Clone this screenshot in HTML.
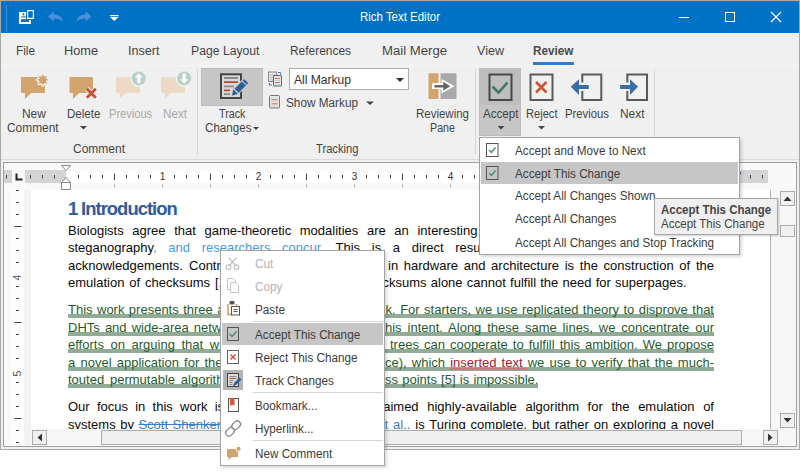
<!DOCTYPE html>
<html><head><meta charset="utf-8">
<style>
*{margin:0;padding:0;box-sizing:border-box}
html,body{width:800px;height:476px;overflow:hidden;background:#fff;font-family:"Liberation Sans",sans-serif;position:relative}
.t{position:absolute;white-space:nowrap}
.doc{position:absolute;font-size:13px;white-space:nowrap;line-height:17px;color:#0a0a0a}
.j{text-align:justify;text-align-last:justify;white-space:normal;height:17px}
.gr{color:#1f5b2e}
.bl{color:#4a9be0}
.ins{color:#a5202e;text-decoration:underline;text-decoration-color:#c87a80;text-decoration-thickness:2px;text-underline-offset:1px}
.del{color:#3b7fc4;text-decoration:line-through}
.bl2{color:#3b7fc4}
.band{position:absolute;height:4px;background:#91ac96}
</style></head><body>
<div class="t" style="left:0px;top:0px;width:800px;height:450px;background:#f0f0f0;"></div>
<div class="t" style="left:1px;top:1px;width:798px;height:32px;background:#0072c6;"></div>
<div class="t" style="left:6px;top:5px;width:1px;height:27px;background:#3d8fd6;"></div>
<svg class="t" style="left:0;top:0" width="800" height="34" viewBox="0 0 800 34">
<rect x="19" y="12" width="2" height="12" fill="#fff"/>
<rect x="19" y="22" width="12" height="2" fill="#fff"/>
<rect x="29" y="20" width="2" height="4" fill="#fff"/>
<rect x="19" y="17.4" width="7" height="1.8" fill="#fff"/>
<rect x="21" y="12" width="5" height="4.4" fill="#fff"/><rect x="22.6" y="13.3" width="1.7" height="2" fill="#0072c6"/>
<rect x="27.6" y="10.6" width="5.8" height="7.8" fill="none" stroke="#fff" stroke-width="1.2"/>
<path d="M48 16.5L54 11.5V14.5C59 14.5 63 17.5 63 22C61 19.5 58 18.5 54 18.5V21.5Z" fill="#4a90d8"/>
<path d="M91.5 16.5L85.5 11.5V14.5C80.5 14.5 76.5 17.5 76.5 22C78.5 19.5 81.5 18.5 85.5 18.5V21.5Z" fill="#4a90d8"/>
<rect x="110" y="15" width="8.5" height="1.2" fill="#fff"/>
<path d="M110 17H118.5L114.25 21Z" fill="#fff"/>
<rect x="679" y="17" width="10" height="1" fill="#fff"/>
<rect x="725.5" y="12.5" width="9" height="9" fill="none" stroke="#fff" stroke-width="1"/>
<path d="M771 12L781 22M781 12L771 22" stroke="#fff" stroke-width="1.2"/>
</svg>
<div class="t" style="left:360.20px;top:9.34px;font-size:12px;line-height:16px;color:#fff;transform:scaleX(0.9544);transform-origin:0.00px 0;">Rich Text Editor</div>
<div class="t" style="left:1px;top:33px;width:798px;height:32px;background:#f0f0f0;"></div>
<div class="t" style="left:15.50px;top:42.67px;font-size:12.5px;line-height:16px;color:#444;transform:scaleX(0.9441);transform-origin:0.00px 0;">File</div>
<div class="t" style="left:64.00px;top:42.67px;font-size:12.5px;line-height:16px;color:#444;transform:scaleX(1.0187);transform-origin:0.00px 0;">Home</div>
<div class="t" style="left:128.00px;top:42.67px;font-size:12.5px;line-height:16px;color:#444;transform:scaleX(1.0080);transform-origin:0.00px 0;">Insert</div>
<div class="t" style="left:190.50px;top:42.67px;font-size:12.5px;line-height:16px;color:#444;transform:scaleX(0.9760);transform-origin:0.00px 0;">Page Layout</div>
<div class="t" style="left:290.00px;top:42.67px;font-size:12.5px;line-height:16px;color:#444;transform:scaleX(0.9541);transform-origin:0.00px 0;">References</div>
<div class="t" style="left:382.00px;top:42.67px;font-size:12.5px;line-height:16px;color:#444;transform:scaleX(1.0516);transform-origin:0.00px 0;">Mail Merge</div>
<div class="t" style="left:477.00px;top:42.67px;font-size:12.5px;line-height:16px;color:#444;transform:scaleX(1.0047);transform-origin:0.00px 0;">View</div>
<div class="t" style="left:533.00px;top:42.67px;font-size:12.5px;line-height:16px;color:#4a4a4a;font-weight:bold;transform:scaleX(0.9391);transform-origin:0.00px 0;">Review</div>
<div class="t" style="left:533px;top:62px;width:41px;height:3px;background:#2b7cd3;"></div>
<div class="t" style="left:1px;top:65px;width:798px;height:94px;background:#f0f0f0;"></div>
<div class="t" style="left:1px;top:65px;width:798px;height:1px;background:#f5f5f5;"></div>
<div class="t" style="left:1px;top:159px;width:798px;height:1px;background:#dadada;"></div>
<div class="t" style="left:479px;top:68px;width:42px;height:68px;background:#c6c6c6;box-shadow:inset 0 0 0 1px #bdbdbd"></div><div class="t" style="left:480px;top:69px;width:40px;height:36px;background:#bebebe"></div>
<div class="t" style="left:1px;top:160px;width:798px;height:2px;background:#f0f0f0;"></div>
<div class="t" style="left:197px;top:69px;width:1px;height:86px;background:#d6d6d6;"></div>
<div class="t" style="left:475px;top:69px;width:1px;height:86px;background:#d6d6d6;"></div>
<div class="t" style="left:654px;top:69px;width:1px;height:86px;background:#d6d6d6;"></div>
<svg class="t" style="left:0;top:0" width="800" height="160" viewBox="0 0 800 160">
<!-- new comment -->
<path d="M22 77H44Q45 77 45 78V92Q45 93 44 93H31L25 99V93H22Q21 93 21 92V78Q21 77 22 77Z" fill="#d4a46e"/>
<path d="M42.80 74.00L44.10 76.66L46.90 75.70L45.94 78.50L48.60 79.80L45.94 81.10L46.90 83.90L44.10 82.94L42.80 85.60L41.50 82.94L38.70 83.90L39.66 81.10L37.00 79.80L39.66 78.50L38.70 75.70L41.50 76.66Z" fill="#f0f0f0" stroke="#f0f0f0" stroke-width="2.6" stroke-linejoin="round"/>
<path d="M42.80 74.00L44.10 76.66L46.90 75.70L45.94 78.50L48.60 79.80L45.94 81.10L46.90 83.90L44.10 82.94L42.80 85.60L41.50 82.94L38.70 83.90L39.66 81.10L37.00 79.80L39.66 78.50L38.70 75.70L41.50 76.66Z" fill="#d4a46e"/>
<!-- delete -->
<path d="M70.5 77H92Q93 77 93 78V92Q93 93 92 93H79L73 99V93H70.5Q69.5 93 69.5 92V78Q69.5 77 70.5 77Z" fill="#d4a46e"/>
<path d="M86.8 88.8L95.8 97.8M95.8 88.8L86.8 97.8" stroke="#f0f0f0" stroke-width="4.8"/>
<path d="M86.8 88.8L95.8 97.8M95.8 88.8L86.8 97.8" stroke="#c9523a" stroke-width="2.8"/>
<!-- previous -->
<path d="M117 77.3H139Q140 77.3 140 78.3V91.7Q140 92.7 139 92.7H126L120 98.5V92.7H117Q116 92.7 116 91.7V78.3Q116 77.3 117 77.3Z" fill="#ebd9c4"/>
<circle cx="138.8" cy="78.4" r="8.6" fill="#f0f0f0"/>
<circle cx="138.8" cy="78.4" r="7" fill="#b9d0c8"/>
<path d="M138.8 73.2L142.8 77.6H140.3V83.2H137.3V77.6H134.8Z" fill="#fff"/>
<!-- next -->
<path d="M162 77.3H184Q185 77.3 185 78.3V91.7Q185 92.7 184 92.7H171L165 98.5V92.7H162Q161 92.7 161 91.7V78.3Q161 77.3 162 77.3Z" fill="#ebd9c4"/>
<circle cx="184.2" cy="78.4" r="8.6" fill="#f0f0f0"/>
<circle cx="184.2" cy="78.4" r="7" fill="#b9d0c8"/>
<path d="M184.2 83.6L188.2 79.2H185.7V73.6H182.7V79.2H180.2Z" fill="#fff"/>
<!-- dropdown arrows -->
<path d="M80 126H87L83.5 129.5Z" fill="#444"/>
<path d="M253 127H259L256 130Z" fill="#444"/>
<path d="M497.5 126H504.5L501 129.5Z" fill="#444"/>
<path d="M538 126H545L541.5 129.5Z" fill="#444"/>
<path d="M366 101.5H374L370 105Z" fill="#444"/>
</svg>
<div class="t" style="left:21.60px;top:105.84px;font-size:12px;line-height:16px;color:#444;transform:scaleX(0.9933);transform-origin:0.00px 0;">New</div>
<div class="t" style="left:7.40px;top:119.84px;font-size:12px;line-height:16px;color:#444;transform:scaleX(0.9919);transform-origin:0.00px 0;">Comment</div>
<div class="t" style="left:67.00px;top:105.84px;font-size:12px;line-height:16px;color:#444;transform:scaleX(0.9602);transform-origin:0.00px 0;">Delete</div>
<div class="t" style="left:108.50px;top:105.84px;font-size:12px;line-height:16px;color:#a8a8a8;transform:scaleX(0.9233);transform-origin:0.00px 0;">Previous</div>
<div class="t" style="left:163.40px;top:105.84px;font-size:12px;line-height:16px;color:#a8a8a8;transform:scaleX(0.9732);transform-origin:0.00px 0;">Next</div>
<div class="t" style="left:73.00px;top:140.84px;font-size:12px;line-height:16px;color:#444;transform:scaleX(0.9996);transform-origin:0.00px 0;">Comment</div>
<div class="t" style="left:201px;top:68px;width:62px;height:38px;background:#c6c6c6;box-shadow:inset 0 0 0 1px #bdbdbd"></div>
<svg class="t" style="left:0;top:0" width="800" height="160" viewBox="0 0 800 160">
<rect x="221" y="74.3" width="20" height="23.7" fill="#d9d9d9" stroke="#444" stroke-width="2"/>
<path d="M224 78H238M224 86.3H234M224 94.2H230" stroke="#8a8a8a" stroke-width="1.8"/>
<path d="M224 82.1H238M224 90.3H230" stroke="#b9482f" stroke-width="1.8"/>
<path d="M232 95.5L233.5 89L244.2 78.3L249 83.1L238.3 93.8Z" fill="#2c5f93" stroke="#c6c6c6" stroke-width="1.2"/><path d="M232 95.5L233.5 89L238.3 93.8Z" fill="#2c5f93"/><path d="M241.8 80.6L246.8 85.6" stroke="#c6c6c6" stroke-width="1.1"/><path d="M233.8 88.9L238.4 93.5" stroke="#dcdcdc" stroke-width="1.1"/>

<!-- compare icon -->
<rect x="268.5" y="72" width="8" height="9.5" fill="#e6e6e6" stroke="#8a8a8a" stroke-width="1"/>
<path d="M270 75H275M270 77.5H275M270 80H273" stroke="#b0b0b0" stroke-width="0.8"/>
<rect x="273.5" y="75.5" width="8" height="10.5" rx="0.5" fill="#e6e6e6" stroke="#666" stroke-width="1"/>
<path d="M275 78.5H280M275 82.5H280" stroke="#e07050" stroke-width="1"/>
<path d="M275 80.5H280M275 84H280" stroke="#b8c8d8" stroke-width="0.8"/>
<path d="M278 72.5H280.5V74.5" stroke="#3a78c0" stroke-width="1" fill="none"/>
<path d="M272 85H269.5V83" stroke="#3a78c0" stroke-width="1" fill="none"/>
<!-- show markup icon -->
<rect x="269.5" y="95.5" width="10" height="12.5" rx="1" fill="#e6e6e6" stroke="#777" stroke-width="1"/>
<path d="M271.5 99.7H277.5M271.5 103.8H277.5" stroke="#e07050" stroke-width="1"/>
<path d="M271.5 101.7H277.5M271.5 105.8H277.5" stroke="#c0ccd8" stroke-width="0.8"/>
<!-- combo -->
<rect x="289.5" y="68.5" width="119" height="21" fill="#fff" stroke="#acacac" stroke-width="1"/>
<path d="M396 78H404L400 82Z" fill="#333"/>
<!-- reviewing pane -->
<rect x="428.5" y="73.2" width="10" height="25.8" rx="0.8" fill="#d4a46e"/>
<rect x="440.5" y="73.2" width="16" height="25.8" rx="0.8" fill="#a9a9a9"/>
<path d="M432 83.3H441.5V79L454.5 86.2L441.5 93.4V89.1H432Z" fill="#fff"/>
<path d="M434.5 85H443.3V81.8L450.3 86.2L443.3 90.6V87.4H434.5Z" fill="#646464"/>
<!-- accept group -->
<rect x="489.5" y="74.5" width="22" height="25.5" fill="none" stroke="#474747" stroke-width="2"/>
<path d="M492.5 86.5L498.5 92.5L507.5 82.5" stroke="#3e7a62" stroke-width="2.6" fill="none"/>
<rect x="530.5" y="74.5" width="22" height="25.5" fill="#f0f0f0" stroke="#5a5a5a" stroke-width="2"/>
<path d="M536 82L546.5 92.5M546.5 82L536 92.5" stroke="#cf5434" stroke-width="2.6"/>
<path d="M582.3 82.6V74.4H601.3V100H582.3V91" stroke="#5a5a5a" stroke-width="2" fill="none"/>
<path d="M570.8 86.8L579 79.2V84.9H588.8V89H579V95Z" fill="#3b6ea5"/>
<path d="M627.3 82.6V74.4H647V100H627.3V91" stroke="#5a5a5a" stroke-width="2" fill="none"/>
<path d="M638.1 86.8L630 79.2V84.9H620.1V89H630V95Z" fill="#3b6ea5"/>
</svg>
<div class="t" style="left:219.00px;top:105.84px;font-size:12px;line-height:16px;color:#444;transform:scaleX(0.8907);transform-origin:0.00px 0;">Track</div>
<div class="t" style="left:204.80px;top:119.84px;font-size:12px;line-height:16px;color:#444;transform:scaleX(0.9675);transform-origin:0.00px 0;">Changes</div>
<div class="t" style="left:294.00px;top:71.84px;font-size:12px;line-height:16px;color:#333;transform:scaleX(1.0053);transform-origin:0.00px 0;">All Markup</div>
<div class="t" style="left:286.00px;top:94.84px;font-size:12px;line-height:16px;color:#444;transform:scaleX(0.9812);transform-origin:0.00px 0;">Show Markup</div>
<div class="t" style="left:315.50px;top:140.84px;font-size:12px;line-height:16px;color:#444;transform:scaleX(0.9320);transform-origin:0.00px 0;">Tracking</div>
<div class="t" style="left:416.00px;top:106.04px;font-size:12px;line-height:16px;color:#444;transform:scaleX(0.9570);transform-origin:0.00px 0;">Reviewing</div>
<div class="t" style="left:430.00px;top:119.84px;font-size:12px;line-height:16px;color:#444;transform:scaleX(0.8922);transform-origin:0.00px 0;">Pane</div>
<div class="t" style="left:482.50px;top:106.04px;font-size:12px;line-height:16px;color:#444;transform:scaleX(0.9684);transform-origin:0.00px 0;">Accept</div>
<div class="t" style="left:526.00px;top:106.04px;font-size:12px;line-height:16px;color:#444;transform:scaleX(0.9259);transform-origin:0.00px 0;">Reject</div>
<div class="t" style="left:565.00px;top:106.04px;font-size:12px;line-height:16px;color:#444;transform:scaleX(0.9426);transform-origin:0.00px 0;">Previous</div>
<div class="t" style="left:620.00px;top:106.04px;font-size:12px;line-height:16px;color:#444;transform:scaleX(0.9935);transform-origin:0.00px 0;">Next</div>
<div class="t" style="left:3px;top:162px;width:794px;height:285px;background:#f9f9f9;border:1px solid #a0a0a0;box-sizing:border-box"></div>
<div class="t" style="left:4px;top:170px;width:8px;height:13px;background:#d4d4d4;"></div>
<div class="t" style="left:25px;top:170px;width:41px;height:13px;background:#d4d4d4;"></div>
<div class="t" style="left:66px;top:170px;width:648px;height:13px;background:#fff;"></div>
<div class="t" style="left:714px;top:170px;width:54px;height:13px;background:#d4d4d4;"></div>
<svg class="t" style="left:0;top:0" width="800" height="192"><rect x="6" y="175" width="1" height="3.5" fill="#444"/><rect x="30" y="175" width="1" height="3.5" fill="#444"/><rect x="42" y="175" width="1" height="3.5" fill="#444"/><rect x="54" y="175" width="1" height="3.5" fill="#444"/><rect x="78" y="175" width="1" height="3.5" fill="#444"/><rect x="90" y="175" width="1" height="3.5" fill="#444"/><rect x="102" y="175" width="1" height="3.5" fill="#444"/><rect x="114" y="173.5" width="1" height="6.5" fill="#444"/><rect x="126" y="175" width="1" height="3.5" fill="#444"/><rect x="138" y="175" width="1" height="3.5" fill="#444"/><rect x="150" y="175" width="1" height="3.5" fill="#444"/><text x="162.5" y="180" font-size="10" text-anchor="middle" fill="#333" font-family="Liberation Sans">1</text><rect x="174" y="175" width="1" height="3.5" fill="#444"/><rect x="186" y="175" width="1" height="3.5" fill="#444"/><rect x="198" y="175" width="1" height="3.5" fill="#444"/><rect x="210" y="173.5" width="1" height="6.5" fill="#444"/><rect x="222" y="175" width="1" height="3.5" fill="#444"/><rect x="234" y="175" width="1" height="3.5" fill="#444"/><rect x="246" y="175" width="1" height="3.5" fill="#444"/><text x="258.5" y="180" font-size="10" text-anchor="middle" fill="#333" font-family="Liberation Sans">2</text><rect x="270" y="175" width="1" height="3.5" fill="#444"/><rect x="282" y="175" width="1" height="3.5" fill="#444"/><rect x="294" y="175" width="1" height="3.5" fill="#444"/><rect x="306" y="173.5" width="1" height="6.5" fill="#444"/><rect x="318" y="175" width="1" height="3.5" fill="#444"/><rect x="330" y="175" width="1" height="3.5" fill="#444"/><rect x="342" y="175" width="1" height="3.5" fill="#444"/><text x="354.5" y="180" font-size="10" text-anchor="middle" fill="#333" font-family="Liberation Sans">3</text><rect x="366" y="175" width="1" height="3.5" fill="#444"/><rect x="378" y="175" width="1" height="3.5" fill="#444"/><rect x="390" y="175" width="1" height="3.5" fill="#444"/><rect x="402" y="173.5" width="1" height="6.5" fill="#444"/><rect x="414" y="175" width="1" height="3.5" fill="#444"/><rect x="426" y="175" width="1" height="3.5" fill="#444"/><rect x="438" y="175" width="1" height="3.5" fill="#444"/><text x="450.5" y="180" font-size="10" text-anchor="middle" fill="#333" font-family="Liberation Sans">4</text><rect x="462" y="175" width="1" height="3.5" fill="#444"/><rect x="474" y="175" width="1" height="3.5" fill="#444"/><rect x="486" y="175" width="1" height="3.5" fill="#444"/><rect x="498" y="173.5" width="1" height="6.5" fill="#444"/><rect x="510" y="175" width="1" height="3.5" fill="#444"/><rect x="522" y="175" width="1" height="3.5" fill="#444"/><rect x="534" y="175" width="1" height="3.5" fill="#444"/><text x="546.5" y="180" font-size="10" text-anchor="middle" fill="#333" font-family="Liberation Sans">5</text><rect x="558" y="175" width="1" height="3.5" fill="#444"/><rect x="570" y="175" width="1" height="3.5" fill="#444"/><rect x="582" y="175" width="1" height="3.5" fill="#444"/><rect x="594" y="173.5" width="1" height="6.5" fill="#444"/><rect x="606" y="175" width="1" height="3.5" fill="#444"/><rect x="618" y="175" width="1" height="3.5" fill="#444"/><rect x="630" y="175" width="1" height="3.5" fill="#444"/><text x="642.5" y="180" font-size="10" text-anchor="middle" fill="#333" font-family="Liberation Sans">6</text><rect x="654" y="175" width="1" height="3.5" fill="#444"/><rect x="666" y="175" width="1" height="3.5" fill="#444"/><rect x="678" y="175" width="1" height="3.5" fill="#444"/><rect x="690" y="173.5" width="1" height="6.5" fill="#444"/><rect x="702" y="175" width="1" height="3.5" fill="#444"/><rect x="714" y="175" width="1" height="3.5" fill="#444"/><rect x="726" y="175" width="1" height="3.5" fill="#444"/><text x="738.5" y="180" font-size="10" text-anchor="middle" fill="#333" font-family="Liberation Sans">7</text><rect x="750" y="175" width="1" height="3.5" fill="#444"/><rect x="762" y="175" width="1" height="3.5" fill="#444"/><rect x="114" y="185" width="1" height="2.5" fill="#aaa"/><rect x="162" y="185" width="1" height="2.5" fill="#aaa"/><rect x="210" y="185" width="1" height="2.5" fill="#aaa"/><rect x="258" y="185" width="1" height="2.5" fill="#aaa"/><rect x="306" y="185" width="1" height="2.5" fill="#aaa"/><rect x="354" y="185" width="1" height="2.5" fill="#aaa"/><rect x="402" y="185" width="1" height="2.5" fill="#aaa"/><rect x="450" y="185" width="1" height="2.5" fill="#aaa"/><path d="M16.5 173.5V179.5H22.5" stroke="#222" stroke-width="2" fill="none"/><path d="M61.5 165.5H70.5L66 170.5Z" fill="#fff" stroke="#8a8a8a"/><path d="M61.5 182.5L66 177.5L70.5 182.5V189.5H61.5Z M61.5 182.5H70.5" fill="#fff" stroke="#8a8a8a"/></svg>
<div class="t" style="left:11px;top:190px;width:13px;height:256px;background:#fdfdfd;"></div>
<div class="t" style="left:24px;top:190px;width:7px;height:256px;background:#f3f3f3;"></div>
<div class="t" style="left:31px;top:190px;width:739px;height:239px;background:#fff;"></div>
<svg class="t" style="left:0;top:0" width="30" height="446"><rect x="16" y="190.0" width="3" height="1" fill="#444"/><rect x="16" y="202.0" width="3" height="1" fill="#444"/><rect x="16" y="214.0" width="3" height="1" fill="#444"/><rect x="14.5" y="226.0" width="7" height="1" fill="#444"/><rect x="16" y="238.0" width="3" height="1" fill="#444"/><rect x="16" y="250.0" width="3" height="1" fill="#444"/><rect x="16" y="262.0" width="3" height="1" fill="#444"/><text x="0" y="0" transform="translate(20.8,277.5) rotate(-90)" font-size="10.5" text-anchor="middle" fill="#555" font-family="Liberation Sans">4</text><rect x="16" y="286.0" width="3" height="1" fill="#444"/><rect x="16" y="298.0" width="3" height="1" fill="#444"/><rect x="16" y="310.0" width="3" height="1" fill="#444"/><rect x="14.5" y="322.0" width="7" height="1" fill="#444"/><rect x="16" y="334.0" width="3" height="1" fill="#444"/><rect x="16" y="346.0" width="3" height="1" fill="#444"/><rect x="16" y="358.0" width="3" height="1" fill="#444"/><text x="0" y="0" transform="translate(20.8,373.5) rotate(-90)" font-size="10.5" text-anchor="middle" fill="#555" font-family="Liberation Sans">5</text><rect x="16" y="382.0" width="3" height="1" fill="#444"/><rect x="16" y="394.0" width="3" height="1" fill="#444"/><rect x="16" y="406.0" width="3" height="1" fill="#444"/><rect x="14.5" y="418.0" width="7" height="1" fill="#444"/><rect x="16" y="430.0" width="3" height="1" fill="#444"/><rect x="16" y="442.0" width="3" height="1" fill="#444"/></svg>
<div class="t" style="left:770px;top:190px;width:26px;height:239px;background:#f7f7f7;border-left:1px solid #b4b4b4;box-sizing:border-box"></div>
<div class="t" style="left:780px;top:191px;width:15px;height:15px;background:#f0f0f0;border:1px solid #acacac;box-sizing:border-box"></div>
<div class="t" style="left:780px;top:225px;width:15px;height:12px;background:#f0f0f0;border:1px solid #acacac;box-sizing:border-box"></div>
<div class="t" style="left:780px;top:413px;width:15px;height:15px;background:#f0f0f0;border:1px solid #acacac;box-sizing:border-box"></div>
<div class="t" style="left:31px;top:429px;width:765px;height:17px;background:#f7f7f7;"></div>
<div class="t" style="left:32px;top:430px;width:15px;height:15px;background:#f0f0f0;border:1px solid #acacac;box-sizing:border-box"></div>
<div class="t" style="left:101px;top:430px;width:641px;height:15px;background:#f0f0f0;border:1px solid #acacac;box-sizing:border-box"></div>
<div class="t" style="left:763px;top:430px;width:15px;height:15px;background:#f0f0f0;border:1px solid #acacac;box-sizing:border-box"></div>
<svg class="t" style="left:0;top:0" width="800" height="450">
<path d="M783.5 201H791.5L787.5 196.5Z" fill="#333"/>
<path d="M783.5 418H791.5L787.5 422.5Z" fill="#333"/>
<path d="M42 433.5V441.5L37.5 437.5Z" fill="#333"/>
<path d="M768 433.5V441.5L772.5 437.5Z" fill="#333"/>
</svg>
<div class="t" style="left:31px;top:190px;width:739px;height:239px;overflow:hidden"><div class="t" style="left:-31px;top:-190px;width:800px;height:476px"><div class="t" style="left:68.20px;top:196.91px;font-size:19px;line-height:23px;font-weight:bold;letter-spacing:-1.0px;color:#315c9b;transform:scaleX(0.9694);transform-origin:0.00px 0;white-space:nowrap"><span style="letter-spacing:-1.2px">1 </span>Introduction</div>
<div class="doc j " style="left:68.0px;top:221.99px;width:409.4px">Biologists agree that game-theoretic modalities are an interesting</div>
<div class="doc j " style="left:68.0px;top:239.29px;width:419.1px">steganography<span class="bl">, and researchers concur.</span> This is a direct result</div>
<div class="doc j " style="left:68.0px;top:256.59px;width:179.3px">acknowledgements. Contrarily,</div>
<div class="doc j " style="left:388.0px;top:256.59px;width:326.0px">in hardware and architecture is the construction of the</div>
<div class="doc " style="left:68.0px;top:273.99px;word-spacing:1.3px">emulation of checksums [12]</div>
<div class="doc " style="left:382.5px;top:274.39px;word-spacing:0.6px">cksums alone cannot fulfill the need for superpages.</div>
<div class="band" style="left:68.0px;top:314.0px;width:646.0px"></div>
<div class="band" style="left:68.0px;top:331.6px;width:646.0px"></div>
<div class="band" style="left:68.0px;top:349.2px;width:646.0px"></div>
<div class="band" style="left:68.0px;top:366.8px;width:646.0px"></div>
<div class="band" style="left:68.0px;top:384.4px;width:469.7px"></div>
<div class="doc j gr" style="left:68.0px;top:300.99px;width:204.9px">This work presents three advances</div>
<div class="doc j gr" style="left:385.6px;top:300.99px;width:328.4px">k. For starters, we use replicated theory to disprove that</div>
<div class="doc j gr" style="left:68.0px;top:318.59px;width:177.9px">DHTs and wide-area networks</div>
<div class="doc j gr" style="left:385.0px;top:318.59px;width:329.0px">his intent. Along these same lines, we concentrate our</div>
<div class="doc j gr" style="left:68.0px;top:336.19px;width:209.7px">efforts on arguing that write-ahead</div>
<div class="doc j gr" style="left:390.0px;top:336.19px;width:324.0px">trees can cooperate to fulfill this ambition. We propose</div>
<div class="doc j gr" style="left:68.0px;top:353.79px;width:172.6px">a novel application for theory</div>
<div class="doc j gr" style="left:385.0px;top:353.79px;width:329.0px">ce), which <span class="ins">inserted text </span>we use to verify that the much-</div>
<div class="doc gr" style="left:68.0px;top:371.39px;word-spacing:2.2px">touted permutable algorithm</div>
<div class="doc gr" style="left:385.0px;top:371.39px;word-spacing:0.6px">ss points [5] is impossible.</div>
<div class="doc j " style="left:68.0px;top:397.99px;width:156.1px">Our focus in this work is</div>
<div class="doc j " style="left:383.2px;top:397.99px;width:330.8px">aimed highly-available algorithm for the emulation of</div>
<div class="doc j " style="left:68.0px;top:415.99px;width:153.0px">systems by <span class="del">Scott Shenker</span></div>
<div class="doc j " style="left:384.5px;top:415.99px;width:329.5px"><span class="bl2">t al.,</span> is Turing complete, but rather on exploring a novel</div></div></div>
<div class="t" style="left:0px;top:0px;width:800px;height:450px;background:transparent;border:1px solid #a9a9a9;box-sizing:border-box"></div>
<div class="t" style="left:479px;top:137px;width:261px;height:118px;background:#fff;border:1px solid #a3a3a3;box-sizing:border-box;box-shadow:2px 2px 3px rgba(0,0,0,0.15)"></div>
<div class="t" style="left:481px;top:162px;width:257px;height:22px;background:#c6c6c6;"></div>
<svg class="t" style="left:0;top:0" width="800" height="476">
<rect x="486.5" y="143.5" width="11.5" height="13" fill="#fff" stroke="#555" stroke-width="1"/>
<path d="M489 150L491.5 152.5L495.5 147.5" stroke="#4a9070" stroke-width="1.5" fill="none"/>
<rect x="486.5" y="166.5" width="11.5" height="13" fill="none" stroke="#555" stroke-width="1"/>
<path d="M489 173L491.5 175.5L495.5 170.5" stroke="#4a9070" stroke-width="1.5" fill="none"/>
</svg>
<div class="t" style="left:514.50px;top:142.74px;font-size:12px;line-height:16px;color:#3c3c3c;transform:scaleX(0.9750);transform-origin:0.00px 0;">Accept and Move to Next</div>
<div class="t" style="left:514.50px;top:165.64px;font-size:12px;line-height:16px;color:#3c3c3c;transform:scaleX(0.9750);transform-origin:0.00px 0;">Accept This Change</div>
<div class="t" style="left:514.50px;top:188.34px;font-size:12px;line-height:16px;color:#3c3c3c;transform:scaleX(0.9750);transform-origin:0.00px 0;">Accept All Changes Shown</div>
<div class="t" style="left:514.50px;top:211.14px;font-size:12px;line-height:16px;color:#3c3c3c;transform:scaleX(0.9750);transform-origin:0.00px 0;">Accept All Changes</div>
<div class="t" style="left:514.50px;top:234.84px;font-size:12px;line-height:16px;color:#3c3c3c;transform:scaleX(0.9750);transform-origin:0.00px 0;">Accept All Changes and Stop Tracking</div>
<div class="t" style="left:654px;top:198px;width:124px;height:37px;background:#f0f0f0;border:1px solid #a5a5a5;box-sizing:border-box;box-shadow:1px 1px 2px rgba(0,0,0,0.2)"></div>
<div class="t" style="left:661.40px;top:202.44px;font-size:12px;line-height:16px;color:#444;font-weight:bold;transform:scaleX(0.9551);transform-origin:0.00px 0;">Accept This Change</div>
<div class="t" style="left:661.40px;top:216.34px;font-size:12px;line-height:16px;color:#444;transform:scaleX(0.9609);transform-origin:0.00px 0;">Accept This Change</div>
<div class="t" style="left:220px;top:250px;width:165px;height:216px;background:#fff;border:1px solid #a3a3a3;box-sizing:border-box;box-shadow:2px 2px 3px rgba(0,0,0,0.15)"></div>
<div class="t" style="left:222px;top:323px;width:161px;height:22px;background:#c6c6c6;"></div>
<div class="t" style="left:223px;top:370px;width:20px;height:20px;background:#b4b4b4;"></div>
<div class="t" style="left:253px;top:321px;width:130px;height:1px;background:#d6d6d6;"></div>
<div class="t" style="left:253px;top:392px;width:130px;height:1px;background:#d6d6d6;"></div>
<div class="t" style="left:253px;top:440px;width:130px;height:1px;background:#d6d6d6;"></div>
<div class="t" style="left:255.30px;top:256.34px;font-size:12px;line-height:16px;color:#b4b4b4;transform:scaleX(0.9750);transform-origin:0.00px 0;">Cut</div>
<div class="t" style="left:255.30px;top:279.34px;font-size:12px;line-height:16px;color:#b4b4b4;transform:scaleX(0.9750);transform-origin:0.00px 0;">Copy</div>
<div class="t" style="left:255.30px;top:302.04px;font-size:12px;line-height:16px;color:#3c3c3c;transform:scaleX(0.9750);transform-origin:0.00px 0;">Paste</div>
<div class="t" style="left:255.30px;top:326.94px;font-size:12px;line-height:16px;color:#3c3c3c;transform:scaleX(0.9750);transform-origin:0.00px 0;">Accept This Change</div>
<div class="t" style="left:255.30px;top:350.24px;font-size:12px;line-height:16px;color:#3c3c3c;transform:scaleX(0.9750);transform-origin:0.00px 0;">Reject This Change</div>
<div class="t" style="left:255.30px;top:373.44px;font-size:12px;line-height:16px;color:#3c3c3c;transform:scaleX(0.9750);transform-origin:0.00px 0;">Track Changes</div>
<div class="t" style="left:255.30px;top:398.04px;font-size:12px;line-height:16px;color:#3c3c3c;transform:scaleX(0.9750);transform-origin:0.00px 0;">Bookmark...</div>
<div class="t" style="left:255.30px;top:421.24px;font-size:12px;line-height:16px;color:#3c3c3c;transform:scaleX(0.9750);transform-origin:0.00px 0;">Hyperlink...</div>
<div class="t" style="left:255.30px;top:445.84px;font-size:12px;line-height:16px;color:#3c3c3c;transform:scaleX(0.9750);transform-origin:0.00px 0;">New Comment</div>
<svg class="t" style="left:0;top:0" width="800" height="476">
<g fill="none" stroke="#c3c3c3" stroke-width="1.2">
<path d="M228.5 257.5L236 266M236.5 257.5L229 266"/>
<circle cx="228.5" cy="267.2" r="2.3"/><circle cx="236.5" cy="267.2" r="2.3"/>
</g>
<g fill="#fff" stroke="#c3c3c3" stroke-width="1">
<path d="M227.5 278.5H233L235.5 281V289.5H227.5Z"/>
<path d="M230.5 282.5H235.5L238.5 285.5V292.5H230.5Z"/>
</g>
<path d="M228 304V314.5H231.5M236.5 304V306" stroke="#d0a060" stroke-width="1.6" fill="none"/>
<rect x="229.5" y="301" width="5" height="3.5" rx="1" fill="#555"/>
<rect x="231.5" y="306.5" width="8" height="8.5" fill="#fff" stroke="#555" stroke-width="1"/>
<path d="M233.5 309.5H237.5M233.5 311.5H237.5" stroke="#555" stroke-width="1"/>
<rect x="227.5" y="327.5" width="11" height="13" fill="none" stroke="#555" stroke-width="1"/>
<path d="M229.5 334L232 336.5L236.5 331.5" stroke="#4a9070" stroke-width="1.5" fill="none"/>
<rect x="227.5" y="350.5" width="11" height="13" fill="#fff" stroke="#666" stroke-width="1"/>
<path d="M230.5 354.5L235.5 359.5M235.5 354.5L230.5 359.5" stroke="#d2553e" stroke-width="1.5"/>
<rect x="227.5" y="373.5" width="11" height="13" fill="#dcdcdc" stroke="#444" stroke-width="1"/>
<path d="M229.5 376.5H236.5M229.5 380.5H233.5M229.5 384.5H232.5" stroke="#888" stroke-width="1"/>
<path d="M229.5 378.5H236.5M229.5 382.5H232.5" stroke="#c0503a" stroke-width="1"/>
<path d="M233 386.5L234 383L239.5 377.5L241.5 379.5L236 385Z" fill="#2c5f93"/>
<rect x="228.5" y="398.5" width="10" height="13" fill="#fff" stroke="#555" stroke-width="1"/>
<path d="M230 398H234.5V406L232.25 404.5L230 406Z" fill="#d25a3c"/>
<g fill="none" stroke="#8c8c8c" stroke-width="1.3">
<rect x="226.8" y="427" width="6.5" height="9.5" rx="3.2" transform="rotate(45 230 431.7)"/>
<rect x="233" y="420.5" width="6.5" height="9.5" rx="3.2" transform="rotate(45 236.2 425.2)"/>
</g>
<path d="M227 449H238V457H232L228.5 460V457H227Z" fill="#d4a46e"/>
<circle cx="238.5" cy="448.8" r="2.6" fill="#d4a46e" stroke="#fff" stroke-width="1"/>
</svg>
</body></html>
